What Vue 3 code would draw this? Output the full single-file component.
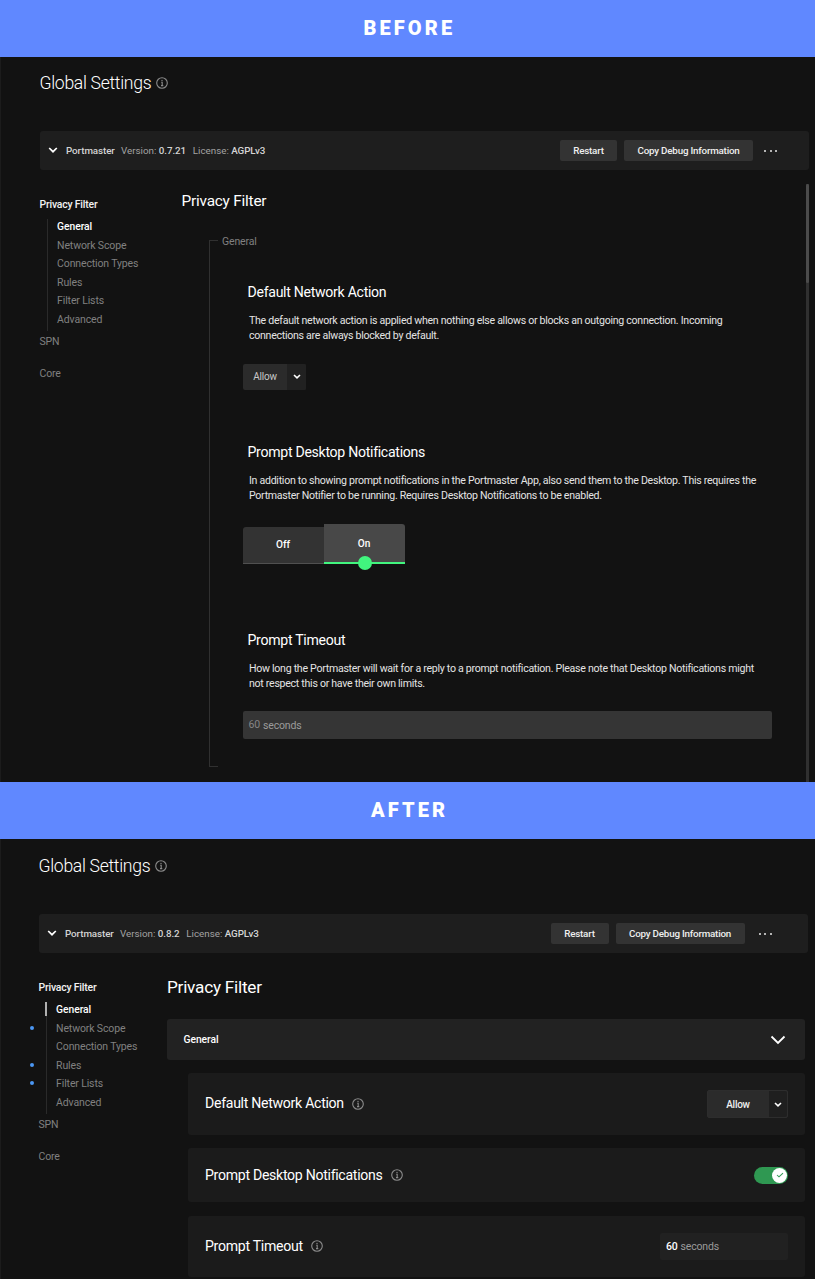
<script setup>
const sections = [
  { name: 'General', active: true },
  { name: 'Network Scope', changed: true },
  { name: 'Connection Types' },
  { name: 'Rules', changed: true },
  { name: 'Filter Lists', changed: true },
  { name: 'Advanced' },
]
const panels = [
  { id: 'before', banner: 'BEFORE', version: '0.7.21' },
  { id: 'after', banner: 'AFTER', version: '0.8.2' },
]
</script>

<template>
  <main class="page">
    <template v-for="p in panels" :key="p.id">
      <header class="banner" :class="p.id"><span>{{ p.banner }}</span></header>
      <section class="panel" :class="p.id">
        <div class="title-row">
          <h1>Global Settings</h1>
          <svg class="info" viewBox="0 0 12 12"><circle cx="6" cy="6" r="5.3" /><path d="M5.2 5.3H6.2V8.6M5 8.6H7.3" /><circle class="dot" cx="6" cy="3.5" r=".7" /></svg>
        </div>

        <div class="bar">
          <svg class="chev" viewBox="0 0 10 6"><path d="M1.2 1L5 4.7L8.8 1" /></svg>
          <b class="name">Portmaster</b>
          <span class="meta ver">Version: <b>{{ p.version }}</b></span>
          <span class="meta lic">License: <b>AGPLv3</b></span>
          <div class="actions">
            <button class="btn restart">Restart</button>
            <button class="btn copy">Copy Debug Information</button>
            <span class="dots"><i></i><i></i><i></i></span>
          </div>
        </div>

        <div class="body">
          <nav class="nav">
            <div class="nav-head">Privacy Filter</div>
            <ul>
              <li v-for="s in sections" :key="s.name" :class="{ active: s.active, changed: s.changed }">{{ s.name }}</li>
            </ul>
            <div class="nav-item">SPN</div>
            <div class="nav-item core">Core</div>
          </nav>

          <div v-if="p.id === 'before'" class="content">
            <h2>Privacy Filter</h2>
            <div class="group">
              <div class="legend">General</div>
              <article class="s1">
                <h3>Default Network Action</h3>
                <p>The default network action is applied when nothing else allows or blocks an outgoing connection. Incoming<br>connections are always blocked by default.</p>
                <div class="select small">
                  <span class="value">Allow</span>
                  <span class="arrow"><svg viewBox="0 0 8 5"><path d="M1 1L4 3.8L7 1" /></svg></span>
                </div>
              </article>
              <article class="s2">
                <h3>Prompt Desktop Notifications</h3>
                <p>In addition to showing prompt notifications in the Portmaster App, also send them to the Desktop. This requires the<br>Portmaster Notifier to be running. Requires Desktop Notifications to be enabled.</p>
                <div class="toggle"><span class="off">Off</span><span class="on">On</span></div>
              </article>
              <article class="s3">
                <h3>Prompt Timeout</h3>
                <p>How long the Portmaster will wait for a reply to a prompt notification. Please note that Desktop Notifications might<br>not respect this or have their own limits.</p>
                <div class="field wide"><span class="num">60</span><span>seconds</span></div>
              </article>
            </div>
          </div>

          <div v-else class="content">
            <h2>Privacy Filter</h2>
            <div class="group-head">
              <span>General</span>
              <svg viewBox="0 0 16 10"><path d="M1.5 1.5L8 8L14.5 1.5" /></svg>
            </div>
            <div class="cards">
              <div class="card c1">
                <h3>Default Network Action</h3>
                <svg class="info" viewBox="0 0 12 12"><circle cx="6" cy="6" r="5.3" /><path d="M5.2 5.3H6.2V8.6M5 8.6H7.3" /><circle class="dot" cx="6" cy="3.5" r=".7" /></svg>
                <div class="select">
                  <span class="value">Allow</span>
                  <span class="arrow"><svg viewBox="0 0 8 5"><path d="M1 1L4 3.8L7 1" /></svg></span>
                </div>
              </div>
              <div class="card c2">
                <h3>Prompt Desktop Notifications</h3>
                <svg class="info" viewBox="0 0 12 12"><circle cx="6" cy="6" r="5.3" /><path d="M5.2 5.3H6.2V8.6M5 8.6H7.3" /><circle class="dot" cx="6" cy="3.5" r=".7" /></svg>
                <div class="switch"><span class="knob"><svg viewBox="0 0 9 7"><path d="M1 3.5L3.3 5.7L8 1.2" /></svg></span></div>
              </div>
              <div class="card c3">
                <h3>Prompt Timeout</h3>
                <svg class="info" viewBox="0 0 12 12"><circle cx="6" cy="6" r="5.3" /><path d="M5.2 5.3H6.2V8.6M5 8.6H7.3" /><circle class="dot" cx="6" cy="3.5" r=".7" /></svg>
                <div class="field compact"><span class="num">60</span><span>seconds</span></div>
              </div>
            </div>
          </div>
          <div v-if="p.id === 'before'" class="scroll"><i></i></div>
        </div>
      </section>
    </template>
  </main>
</template>

<style>
body { background: #121212; }
</style>

<style scoped>
* { box-sizing: border-box; margin: 0; padding: 0; }
.page { width: 815px; height: 1279px; overflow: hidden; background: #121212; color: #fff; font-family: Roboto, "Liberation Sans", sans-serif; font-size: 11px; white-space: nowrap; }
svg { display: block; fill: none; stroke: currentColor; flex: none; }
h1, h2, h3 { font-weight: 400; }

.banner { height: 57px; background: #6088ff; display: flex; padding-left: 363.5px; font-size: 20px; font-weight: 900; letter-spacing: 3.1px; line-height: 56px; }
.banner.after { padding-left: 371px; }
.banner.after span { line-height: 57px; }

.panel { border-left: 1px solid #1c1c1c; overflow: hidden; }
.panel.before { height: 725px; padding-left: 38.5px; }
.panel.after { height: 440px; padding-left: 37.5px; }

.title-row { display: flex; align-items: center; height: 74px; padding-bottom: 22px; }
.after .title-row { height: 75px; padding-bottom: 21px; }
h1 { font-size: 17.6px; font-weight: 300; letter-spacing: -.31px; width: 116.5px; color: #fff; }
.info { width: 12px; height: 12px; color: #8b8b8b; stroke-width: 1.1; }
.info .dot { fill: currentColor; stroke: none; }
.title-row .info { margin-top: -1px; }

.bar { width: 769.5px; height: 39px; display: flex; align-items: center; background: #1e1e1e; border-radius: 3px; font-size: 9.8px; padding-left: 8px; }
.chev { width: 10px; height: 6px; stroke-width: 1.7; margin: -1px 8.5px 0 0; }
.bar b { font-weight: 500; color: #d4d4d4; letter-spacing: -.08px; }
.name { width: 55px; }
.meta { color: #a3a3a3; letter-spacing: 0; }
.ver { width: 71.8px; }
.after .ver { width: 66.3px; }
.actions { margin-left: auto; display: flex; align-items: center; padding-right: 32px; }
.after .actions { padding-right: 36.5px; }
.btn { height: 21px; border: 0; border-radius: 2px; background: #333; color: #efefef; font: 500 9.8px Roboto, sans-serif; letter-spacing: -.2px; }
.restart { width: 57px; }
.after .restart { width: 58px; }
.copy { width: 129px; margin-left: 7px; }
.dots { display: flex; gap: 4px; margin: 1px 0 0 11px; }
.after .dots { margin-left: 14px; }
.dots i { width: 2px; height: 2px; background: #b5b5b5; }
.dots i + i { margin-left: -.5px; }

.body { display: flex; position: relative; }
.nav { width: 142px; padding-top: 25px; color: #808080; font-size: 10.5px; letter-spacing: -.14px; }
.after .nav { width: 128.5px; }
.nav-head { font-weight: 500; color: #f2f2f2; line-height: 19px; font-size: 10.4px; letter-spacing: -.18px; }
.nav ul { list-style: none; margin: 5px 0 0 7px; border-left: 1px solid #2a2a2a; height: 111.5px; }
.nav li { height: 18.6px; line-height: 16.8px; padding-left: 9.6px; position: relative; }
.nav li.active { color: #fff; font-weight: 500; font-size: 10.3px; letter-spacing: -.05px; }
.nav-item { height: 32px; line-height: 22px; }
.after li.active::before { content: ""; position: absolute; left: -1.5px; top: 0; width: 2px; height: 14px; background: #b0b0b0; }
.after li.changed::after { content: ""; position: absolute; left: -17px; top: 5px; width: 4px; height: 4px; border-radius: 50%; background: #4b97f3; }

.before h2 { font-size: 15.4px; letter-spacing: -.22px; line-height: 20px; margin-top: 21px; }
.group { position: relative; margin: 29px 0 0 27.5px; height: 527px; border-left: 1px solid #303030; padding-left: 33px; }
.group::before, .group::after { content: ""; position: absolute; left: 0; width: 8px; height: 1px; background: #303030; }
.group::before { top: 0; }
.group::after { bottom: 0; }
.legend { position: absolute; left: 12px; top: -7px; line-height: 17px; font-size: 10.5px; letter-spacing: -.14px; color: #808080; }
article h3 { padding-left: 4.5px; line-height: 20px; }
h3 { font-size: 14.1px; letter-spacing: -.29px; }
article p { padding-left: 6px; font-size: 10.6px; letter-spacing: -.284px; line-height: 15.2px; margin-top: 11px; color: #e4e4e4; }
.s1 { padding-top: 42px; height: 202px; }
.s2 { height: 187.5px; }
.select { display: flex; border-radius: 2px; color: #f0f0f0; background: #2b2b2b; }
.select .value { display: flex; align-items: center; justify-content: center; font-size: 10px; letter-spacing: -.25px; }
.select .arrow { display: flex; align-items: center; justify-content: center; background: #212121; border-radius: 0 2px 2px 0; color: #fff; }
.select .arrow svg { width: 8px; height: 5px; stroke-width: 1.6; }
.small { width: 63px; height: 26px; margin-top: 20.5px; }
.small .value { width: 44px; color: #c8c8c8; }
.small .arrow { flex: 1; }
.toggle { display: flex; align-items: flex-end; margin-top: 20.5px; height: 40.5px; font-weight: 500; font-size: 10.1px; text-align: center; }
.toggle span { width: 81px; padding-right: 1px; }
.off { height: 37px; line-height: 36px; background: #333; border-bottom: 1px solid #505050; border-radius: 3px 0 0 0; }
.on { height: 40.5px; line-height: 39px; background: #484848; border-bottom: 2px solid #41f57e; border-radius: 0 3px 0 0; position: relative; }
.on::after { content: ""; position: absolute; left: 33.5px; bottom: -8px; width: 14px; height: 14px; border-radius: 50%; background: #41f57e; }
.field { display: flex; align-items: center; border-radius: 2px; font-size: 10.5px; letter-spacing: -.15px; color: #9b9b9b; }
.wide { width: 529px; height: 27.5px; background: #353535; padding-left: 5.5px; margin-top: 20.5px; }
.num { width: 14.5px; font-size: 10.5px; }
.wide .num { color: #858585; margin-top: -1px; }
.scroll { position: absolute; left: 766px; top: 14px; width: 3.5px; height: 600px; background: #303030; }
.scroll i { display: block; height: 99px; background: #4b4b4b; border-radius: 2px; }

.after h2 { font-size: 17.2px; letter-spacing: -.25px; line-height: 22px; margin-top: 22.5px; }
.after .content { width: 637.5px; }
.group-head { height: 41px; margin-top: 21.5px; background: #222; border-radius: 3px; display: flex; align-items: center; justify-content: space-between; padding: 0 19px 0 16.5px; font-weight: 500; font-size: 10.3px; letter-spacing: -.05px; }
.group-head svg { width: 16px; height: 10px; stroke-width: 1.8; }
.cards { margin: 13px 0 0 21px; display: flex; flex-direction: column; gap: 13.3px; }
.card { background: #1b1b1b; border-radius: 3px; display: flex; align-items: center; padding: 0 16.5px 0 17px; }
.c1 { height: 62px; }
.c1 h3 { margin-top: -1.5px; }
.c2 { height: 54px; }
.c3 { height: 61px; }
.card .info { margin-left: 8px; }
.card > :last-child { margin-left: auto; }
.card .select { width: 81.5px; height: 28px; border: 1px solid #2d2d2d; font-weight: 500; }
.card .value { width: 61px; }
.card .arrow { flex: 1; background: #1f1f1f; }
.switch { width: 34px; height: 17px; border-radius: 9px; background: #2f9852; display: flex; justify-content: flex-end; padding: 1px; }
.knob { width: 15px; height: 15px; border-radius: 50%; background: #fff; color: #2f9852; display: flex; align-items: center; justify-content: center; }
.knob svg { width: 8px; height: 6px; stroke-width: 1.2; }
.compact { width: 128px; height: 27px; background: #212121; padding-left: 6px; }
.compact .num { color: #fff; font-weight: 500; }
</style>
